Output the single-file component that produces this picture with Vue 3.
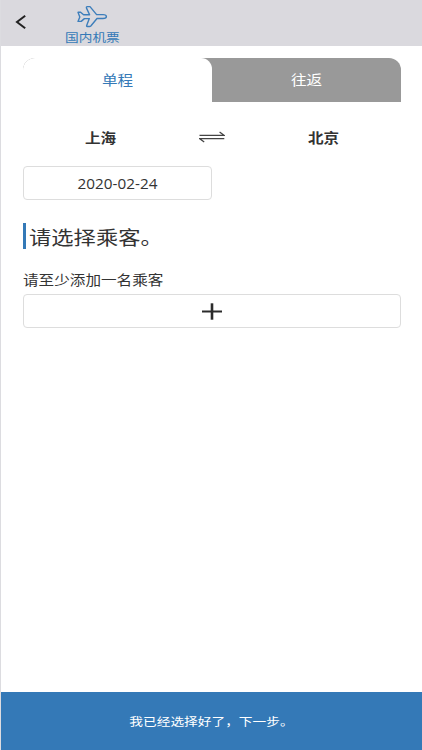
<script setup>
import { ref } from 'vue'

const tabs = ['单程', '往返']
const activeTab = ref(0)

const fromCity = ref('上海')
const toCity = ref('北京')
const date = ref('2020-02-24')

// swaps departure and arrival
function swapCities() {
  const city = fromCity.value
  fromCity.value = toCity.value
  toCity.value = city
}
</script>

<template>
  <div class="page">
    <header class="header">
      <svg class="back" width="12" height="16" viewBox="0 0 12 16">
        <path d="M10.2 1.8 L2 8 L10.2 14.2" />
      </svg>
      <div class="brand">
        <svg class="plane" width="32" height="23" viewBox="0 0 32 23">
          <path d="M2 7.3 H4.6 L7.6 9.8 H13.6 L10.6 3.4 Q9.9 1.7 11.4 1.6 H14 L20.6 9.6 H27 C29.3 9.6 30.4 10.4 30.4 11.5 C30.4 12.7 29.3 13.5 27 13.5 H21 L14.8 21 Q14.3 21.5 13.6 21.5 H11.2 Q10.4 21.4 10.7 20.4 L13.3 13.6 H8.4 L5.2 16.4 H2 L3.8 12 Z" />
        </svg>
        <span class="text brand-name">国内机票</span>
      </div>
    </header>

    <main class="content">
      <div class="tabs">
        <div
          v-for="(tab, i) in tabs" :key="tab"
          class="tab" :class="{ active: activeTab === i }"
          @click="activeTab = i"
        >
          <span class="text">{{ tab }}</span>
        </div>
      </div>

      <div class="cities">
        <span class="text city">{{ fromCity }}</span>
        <svg class="swap" width="26" height="12" viewBox="0 0 26 12" @click="swapCities">
          <path d="M0.5 4.3 H25 L20.6 1 M25.3 7.7 H0.8 L5.2 11" />
        </svg>
        <span class="text city">{{ toCity }}</span>
      </div>

      <div class="date"><span class="text">{{ date }}</span></div>

      <h2 class="title"><span class="text">请选择乘客。</span></h2>

      <p class="hint"><span class="text">请至少添加一名乘客</span></p>
      <button class="add">
        <svg width="20" height="17" viewBox="0 0 20 17">
          <path d="M0 8.5 H20" stroke-width="2" />
          <path d="M10 0.3 V16.7" stroke-width="2.6" />
        </svg>
      </button>
    </main>

    <footer class="footer"><span class="text">我已经选择好了，下一步。</span></footer>
  </div>
</template>

<style>
body {
  margin: 0;
}
</style>

<style scoped>
.page {
  display: flex;
  flex-direction: column;
  box-sizing: border-box;
  height: 750px;
  border-left: 1px solid #dcdce0;
  background: #fff;
  color: #333;
  font-family: "Open Sans", "Noto Sans CJK SC", sans-serif;
  font-size: 15.6px;
}

/* slightly flattened lettering */
.text {
  display: inline-block;
  line-height: 20px;
  white-space: nowrap;
  transform: scaleY(0.86);
}

.header {
  display: flex;
  height: 46px;
  background: #dad9de;
}

.back {
  margin: 14px 0 0 14px;
  fill: none;
  stroke: #222;
  stroke-width: 2;
}

.brand {
  display: flex;
  flex-direction: column;
  align-items: center;
  margin-left: 37px;
  padding-top: 5px;
  color: #3479b7;
}

.plane {
  flex: none;
  fill: none;
  stroke: #3d7ebb;
  stroke-width: 1.4;
  stroke-linejoin: round;
}

.brand-name {
  margin-left: 1px;
  font-size: 13.7px;
}

.content {
  flex: 1;
  padding: 12px 21px 0 22px;
}

.tabs {
  display: flex;
  height: 44px;
  border-radius: 12px 12px 0 0;
  background: #999;
  overflow: hidden;
}

.tab {
  display: flex;
  flex: 1;
  align-items: center;
  justify-content: center;
  color: #fff;
}

.tab.active {
  border-radius: 0 11px 0 0;
  background: #fff;
  color: #3479b7;
}

.cities {
  display: flex;
  align-items: center;
  height: 64px;
  padding-top: 8px;
  box-sizing: border-box;
}

.city {
  flex: 1;
  font-weight: bold;
  text-align: center;
}

.swap {
  margin: -3px 21px 0;
  fill: none;
  stroke: #444;
  stroke-width: 1.3;
}

.date {
  display: flex;
  align-items: center;
  justify-content: center;
  box-sizing: border-box;
  width: 189px;
  height: 34px;
  border: 1px solid #ddd;
  border-radius: 4px;
  font-size: 15.3px;
}

.date .text {
  transform: scaleY(0.92);
}

.title {
  display: flex;
  align-items: center;
  height: 26px;
  margin: 23px 0 0;
  padding-left: 3px;
  border-left: 3px solid #3479b7;
  font-size: 22.3px;
  font-weight: normal;
}

.title .text {
  padding-top: 3px;
}

.hint {
  height: 20px;
  margin: 20px 0 5px;
}

.add {
  display: flex;
  align-items: center;
  justify-content: center;
  box-sizing: border-box;
  width: 100%;
  height: 34px;
  padding: 0;
  border: 1px solid #ddd;
  border-radius: 4px;
  background: #fff;
}

.add svg {
  stroke: #2b2b2b;
}

.footer {
  display: flex;
  align-items: center;
  justify-content: center;
  box-sizing: border-box;
  height: 58px;
  padding-top: 2px;
  background: #3479b7;
  color: #fff;
  font-size: 13.7px;
}
</style>
